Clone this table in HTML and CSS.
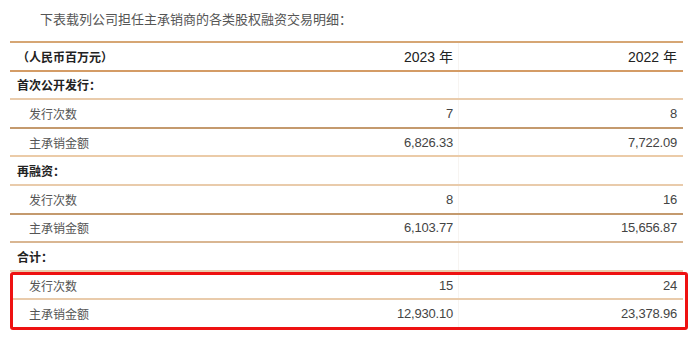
FILE: index.html
```html
<!DOCTYPE html>
<html lang="zh-CN">
<head>
<meta charset="utf-8">
<link rel="stylesheet" href="styles.css">
</head>
<body>
<p class="intro">下表载列公司担任主承销商的各类股权融资交易明细：</p>
<div class="table">
  <div class="row head line-top line-a">
    <div class="cell label strong">（人民币百万元）</div>
    <div class="cell num year">2023 年</div>
    <div class="cell num year split">2022 年</div>
  </div>
  <div class="row line-c">
    <div class="cell label strong">首次公开发行：</div>
    <div class="cell num"></div>
    <div class="cell num split"></div>
  </div>
  <div class="row line-b">
    <div class="cell label sub">发行次数</div>
    <div class="cell num">7</div>
    <div class="cell num split">8</div>
  </div>
  <div class="row line-d">
    <div class="cell label sub">主承销金额</div>
    <div class="cell num">6,826.33</div>
    <div class="cell num split">7,722.09</div>
  </div>
  <div class="row line-c">
    <div class="cell label strong">再融资：</div>
    <div class="cell num"></div>
    <div class="cell num split"></div>
  </div>
  <div class="row line-b">
    <div class="cell label sub">发行次数</div>
    <div class="cell num">8</div>
    <div class="cell num split">16</div>
  </div>
  <div class="row line-e">
    <div class="cell label sub">主承销金额</div>
    <div class="cell num">6,103.77</div>
    <div class="cell num split">15,656.87</div>
  </div>
  <div class="row line-c">
    <div class="cell label strong">合计：</div>
    <div class="cell num"></div>
    <div class="cell num split"></div>
  </div>
  <div class="highlight">
    <div class="row line-c">
      <div class="cell label sub">发行次数</div>
      <div class="cell num">15</div>
      <div class="cell num split">24</div>
    </div>
    <div class="row line-none">
      <div class="cell label sub">主承销金额</div>
      <div class="cell num">12,930.10</div>
      <div class="cell num split">23,378.96</div>
    </div>
  </div>
</div>
</body>
</html>
```
FILE: styles.css
```css
html, body {
  margin: 0;
  padding: 0;
  background: #ffffff;
}
body {
  width: 700px;
  height: 340px;
  overflow: hidden;
  font-family: "Liberation Sans", "Noto Sans CJK SC", sans-serif;
  color: #555;
}
.intro {
  margin: 0;
  padding: 11px 0 0 40px;
  height: 41px;
  box-sizing: border-box;
  font-size: 13px;
  line-height: 18px;
  color: #555;
}
.table {
  margin: 0 0 0 10px;
  width: 673px;
  display: flex;
  flex-direction: column;
}
.row {
  display: grid;
  grid-template-columns: 248px 200px 225px;
  height: 28.6px;
  box-sizing: border-box;
  border-bottom: 2px solid #d8b38e;
}
.line-top { border-top: 2px solid #d6a674; height: 30.6px; }
.line-a { border-bottom-color: #d49c66; }
.line-b { border-bottom-color: #c49a6e; }
.line-c { border-bottom-color: #e9cbab; }
.line-d { border-bottom-color: #ebcba8; }
.line-e { border-bottom-color: #d9b692; }
.line-none { border-bottom: 2px solid transparent; }
.cell {
  display: flex;
  align-items: center;
  font-size: 13px;
  white-space: nowrap;
}
.label { padding-left: 7px; font-size: 12px; }
.strong { font-weight: bold; color: #222; }
.sub { padding-left: 19px; color: #555; }
.num {
  justify-content: flex-end;
  padding-right: 5px;
  color: #444;
  letter-spacing: -0.2px;
}
.year { font-size: 14px; color: #222; letter-spacing: 0; }
.split {
  border-left: 1px solid #f7f4f1;
  padding-right: 6px;
}
.highlight {
  position: relative;
}
.highlight::after {
  content: "";
  position: absolute;
  left: 0;
  top: 0;
  right: -5px;
  bottom: -1px;
  border: 3px solid #ee1111;
  border-radius: 3px;
  pointer-events: none;
}
```
